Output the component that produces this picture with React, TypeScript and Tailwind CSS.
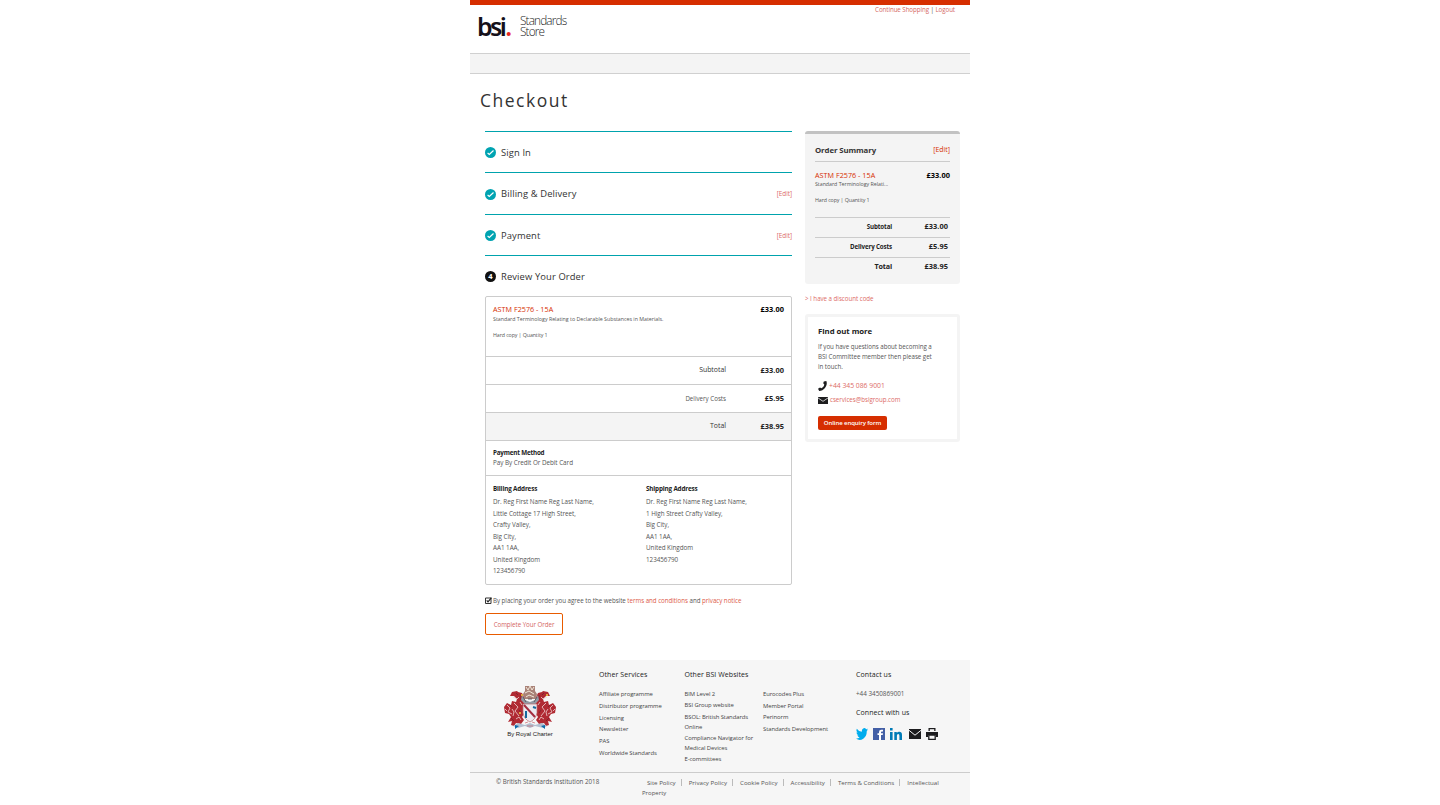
import type { ReactNode } from "react";

const body = "text-[6.2px] tracking-[-0.03px] text-[#555]";

function Check() {
  return (
    <svg className="mb-px size-[11px] shrink-0" viewBox="0 0 11 11">
      <circle cx="5.5" cy="5.5" r="5.5" fill="#00a3b1" />
      <path d="M2.600 6 4.300 7.500 8.500 3.500" fill="none" stroke="#fff" strokeWidth="1.200" />
    </svg>
  );
}

function Step({ title, height, edit, children }: { title: string; height: string; edit?: boolean; children: ReactNode }) {
  return (
    <div className={`flex items-center border-t border-[#00a3ad] pt-[2px] ${height}`}>
      {children}
      <h2 className="ml-[5px] grow text-[9.4px] tracking-[0.12px] text-[#333]">{title}</h2>
      {edit && <a className="pb-px text-[6.4px] tracking-[-0.05px] text-[#dc6b66]">[Edit]</a>}
    </div>
  );
}

function AmountRow({ label, value, labelStyle = "text-[6.9px] text-[#333]", className = "" }: { label: string; value: string; labelStyle?: string; className?: string }) {
  return (
    <div className={`flex h-[28px] items-center justify-end border-b border-[#ccc] pr-[7px] ${className}`}>
      <span className={labelStyle}>{label}</span>
      <span className="w-[58px] text-right text-[7.4px] font-bold tracking-[0.05px] text-[#222]">{value}</span>
    </div>
  );
}

function SummaryRow({ label, value, size = "text-[6.2px]" }: { label: string; value: string; size?: string }) {
  return (
    <div className="flex h-[20px] items-center justify-end border-t border-[#ccc] pb-[2px] pr-[2px]">
      <span className={`font-bold tracking-[-0.13px] text-[#222] ${size}`}>{label}</span>
      <span className="w-[56px] text-right text-[7.4px] font-bold tracking-[0.05px] text-[#222]">{value}</span>
    </div>
  );
}

function Address({ title, lines }: { title: string; lines: string[] }) {
  return (
    <div className="w-[153px] shrink-0">
      <h3 className="text-[6.3px] leading-[10px] font-bold tracking-[-0.15px] text-[#222]">{title}</h3>
      <ul className="mt-[2px] text-[6.3px] leading-[11.5px] tracking-[-0.03px] text-[#555]">
        {lines.map((l) => <li key={l}>{l}</li>)}
      </ul>
    </div>
  );
}

function Mail({ className }: { className: string }) {
  return (
    <svg className={className} viewBox="0 0 12 10" preserveAspectRatio="none">
      <path d="M0 0h12v10H0z" fill="#1d1d1f" />
      <path d="M0 1.300 6 6.200 12 1.300" fill="none" stroke="#f6f6f6" strokeWidth="1" />
    </svg>
  );
}

function Supporter() {
  return (
    <>
      <path d="M14 7l4 1 2 4-2 3 3 4-2 4 2 4-3 5 2 3-3 4-5-1-2 3-3-1 1-4-4 1 3-5-2-3-4-1-1-6 3-4 4 2 1-4 4 1 1-3-3-3-4 0 2-4 5-1z" fill="#b02a33" />
      <path d="M3 20l3 3-2 4 4 2M10 18l4 4-3 4 4 5M9 12l4 2 2-2M8 24l2 3-1 4M16 17l2 3M12 34l3-2 2 3M1 24l2 2" fill="none" stroke="#f0d5d4" strokeWidth=".8" />
      <path d="M17 10v5M6 20l2 2M15 25l2 3M7 33l3 3M12 8l2 2" fill="none" stroke="#6f1f2c" strokeWidth=".7" />
    </>
  );
}

function Arms() {
  return (
    <svg className="h-[45px] w-[52px]" viewBox="0 0 52 45">
      <g><Supporter /></g>
      <g transform="matrix(-1 0 0 1 52 0)"><Supporter /></g>
      <path d="M21 1h10v5l2 3-1 5H20l-1-5 2-3z" fill="#a98278" />
      <path d="M22 2l2 3 2-4 2 4 2-3M21 8l4-2 5 3M22 12l3-2 5 2" fill="none" stroke="#f2e7d8" strokeWidth="1" />
      <path d="M18 10l3 5 5 2 5-2 3-5 1 5-4 4H21l-4-4z" fill="#929aa5" />
      <path d="M19 12l3 5M33 12l-3 5M24 14h4" stroke="#4e4a52" strokeWidth=".8" />
      <path d="M19 19h14v9q-1 6-7 9-6-3-7-9z" fill="#eceaf0" stroke="#ba6b6f" strokeWidth=".7" />
      <path d="M20 20l11 12" stroke="#a42d3f" strokeWidth="2" />
      <path d="M22 26v7" stroke="#16699c" strokeWidth="2" />
      <path d="M29 22l3 1" stroke="#16699c" strokeWidth="2" />
      <path d="M9 41l5-3 7 2 5-2 5 2 7-2 5 3-4 2-8-2-5 2-5-2-7 2z" fill="#b3bfd0" />
      <path d="M21 38l3-1M28 37l3 1M23 41h6" stroke="#c9646c" strokeWidth=".7" />
      <path d="M11 40l4 1-4 3zM41 40l-4 1 4 3z" fill="#0b6bab" />
      <path d="M15 27h2v2h-2zM17 9h2v2h-2zM42 9h2v2h-2z" fill="#e0a63e" />
    </svg>
  );
}

function LinkList({ items, gap, className = "" }: { items: string[]; gap: string; className?: string }) {
  return (
    <ul className={`mt-[9px] flex flex-col text-[5.9px] tracking-[-0.06px] text-[#444] ${gap} ${className}`}>
      {items.map((i) => <li key={i} className="leading-[10px]">{i}</li>)}
    </ul>
  );
}

const footHead = "text-[7px] leading-[10px] tracking-[0.08px] text-[#222]";

export default function App() {
  return (
    <div className="min-h-[805px] bg-white font-['Open_Sans','Noto_Sans',sans-serif]">
      <div className="mx-auto flex h-[805px] w-[500px] flex-col">
        <header className="flex h-[53px] shrink-0 justify-between border-t-[5px] border-[#d62e00]">
          <div className="flex pl-[7px]">
            <div className="mt-[7px] w-[33px] font-['Noto_Sans',sans-serif] text-[25px] leading-[28px] font-semibold tracking-[-2.6px] text-[#15101a]">
              bsi<span className="ml-[1px] text-[#e8291f]">.</span>
            </div>
            <div className="mt-[10px] ml-[10px] text-[11.8px] leading-[10.5px] font-light tracking-[-0.85px] text-[#222]">
              Standards<br />Store
            </div>
          </div>
          <div className="pr-[15px] text-[6.2px] leading-[10px] tracking-[-0.07px] text-[#555]">
            <a className="text-[#d4655f]">Continue Shopping</a> | <a className="text-[#d4655f]">Logout</a>
          </div>
        </header>
        <div className="h-[21px] shrink-0 border-y border-[#d0d0d0] bg-[#f4f4f4]" />
        <h1 className="mt-[16px] ml-[10px] h-[41px] shrink-0 text-[17.500px] leading-[20px] tracking-[1.5px] text-[#333]">Checkout</h1>
        <main className="flex h-[529px] shrink-0 items-start gap-[13px] pl-[15px]">
          <section className="w-[307px]">
            <Step title="Sign In" height="h-[41px]"><Check /></Step>
            <Step title="Billing & Delivery" height="h-[42px]" edit><Check /></Step>
            <Step title="Payment" height="h-[41px]" edit><Check /></Step>
            <Step title="Review Your Order" height="h-[41px]">
              <span className="mb-px flex size-[11px] items-center justify-center rounded-full bg-[#111] text-[7.500px] font-bold text-white">4</span>
            </Step>
            <div className="h-[289px] rounded-[2px] border border-[#ccc]">
              <div className="flex h-[60px] justify-between border-b border-[#ccc] px-[7px] pt-[7px]">
                <div className="text-[5.3px] tracking-[-0.01px] text-[#555]">
                  <div className="text-[7.2px] leading-[10px] tracking-[0.03px] text-[#d62e00]">ASTM F2576 - 15A</div>
                  <div className="leading-[11px]">Standard Terminology Relating to Declarable Substances in Materials.</div>
                  <div className="mt-[5px] leading-[11px] tracking-[-0.1px]">Hard copy | Quantity 1</div>
                </div>
                <div className="text-[7.4px] leading-[10px] font-bold tracking-[0.05px] text-black">£33.00</div>
              </div>
              <AmountRow label="Subtotal" value="£33.00" />
              <AmountRow label="Delivery Costs" value="£5.95" labelStyle="text-[6.2px] text-[#555]" />
              <AmountRow label="Total" value="£38.95" className="bg-[#f4f4f4]" />
              <div className="h-[35px] border-b border-[#ccc] px-[7px] pt-[7px] leading-[10px]">
                <h3 className="text-[6.3px] font-bold tracking-[-0.2px] text-[#222]">Payment Method</h3>
                <p className="text-[6.3px] tracking-[-0.03px] text-[#555]">Pay By Credit Or Debit Card</p>
              </div>
              <div className="flex px-[7px] pt-[8px]">
                <Address title="Billing Address" lines={["Dr. Reg First Name Reg Last Name,", "Little Cottage 17 High Street,", "Crafty Valley,", "Big City,", "AA1 1AA,", "United Kingdom", "123456790"]} />
                <Address title="Shipping Address" lines={["Dr. Reg First Name Reg Last Name,", "1 High Street Crafty Valley,", "Big City,", "AA1 1AA,", "United Kingdom", "123456790"]} />
              </div>
            </div>
            <div className={`mt-[10px] flex h-[12px] items-center whitespace-pre ${body}`}>
              <svg className="mr-[1px] mb-px size-[7px]" viewBox="0 0 7 7"><path d="M.5 1v5.500h5.500V1z" fill="#fff" stroke="#333" /><path d="M1.700 3.400 3 4.800 6.500.7" fill="none" stroke="#222" strokeWidth="1.200" /></svg>
              <span>By placing your order you agree to the website <a className="text-[#dc5a48]">terms and conditions</a> and <a className="text-[#dc5a48]">privacy notice</a></span>
            </div>
            <button className="mt-[6px] flex h-[22px] w-[78px] items-center justify-center rounded-[2px] border border-[#e85b00] pt-px text-[6.2px] tracking-[-0.05px] text-[#d4655f]">Complete Your Order</button>
          </section>
          <aside className="w-[155px]">
            <div className="h-[153px] rounded-[3px] border-t-[3px] border-[#c2c2c2] bg-[#f4f4f4] px-[10px] pt-[10px]">
              <div className="flex h-[18px] justify-between border-b border-[#ccc] leading-[12px]">
                <h2 className="text-[7.8px] font-bold tracking-[-0.1px] text-[#333]">Order Summary</h2>
                <a className="text-[6.900px] text-[#d62e00]">[Edit]</a>
              </div>
              <div className="flex h-[55px] justify-between pt-[8px]">
                <div className="text-[5.3px] tracking-[-0.03px] text-[#555]">
                  <div className="text-[7.2px] leading-[10px] tracking-[0.03px] text-[#d62e00]">ASTM F2576 - 15A</div>
                  <div className="leading-[9px]">Standard Terminology Relati...</div>
                  <div className="mt-[6px] leading-[10px] tracking-[-0.1px]">Hard copy | Quantity 1</div>
                </div>
                <div className="text-[7.4px] leading-[10px] font-bold tracking-[0.05px] text-black">£33.00</div>
              </div>
              <SummaryRow label="Subtotal" value="£33.00" />
              <SummaryRow label="Delivery Costs" value="£5.95" />
              <SummaryRow label="Total" value="£38.95" size="text-[7.2px]" />
            </div>
            <a className="mt-[10px] block text-[6.2px] leading-[10px] tracking-[-0.03px] text-[#dc6b66]">&gt; I have a discount code</a>
            <div className="mt-[10px] h-[128px] rounded-[3px] border-[3px] border-[#f4f4f4] bg-white px-[10px] pt-[9px]">
              <h2 className="text-[7.8px] leading-[10px] font-bold tracking-[-0.05px] text-[#222]">Find out more</h2>
              <p className={`mt-[6px] leading-[10px] ${body}`}>If you have questions about becoming a<br />BSI Committee member then please get<br />in touch.</p>
              <div className="mt-[7px] flex h-[14px] items-center text-[6.8px] text-[#dc6b66]">
                <svg className="mr-[2px] h-[10px] w-[9px]" viewBox="0 0 9 10"><path d="M5.800.6 8.300 0C10 3.500 7 9.500 1.200 10L0 7.800 2 6.500l1.400.7C5 6.500 6 5.200 6.300 3.500L5.200 2.300z" fill="#1d1d1f" /></svg>
                +44 345 086 9001
              </div>
              <div className="flex h-[14px] items-center text-[6.2px] tracking-[-0.03px] text-[#dc6b66]">
                <Mail className="mr-[2px] h-[7px] w-[10px]" />cservices@bsigroup.com
              </div>
              <button className="mt-[9px] flex h-[14px] w-[69px] items-center justify-center rounded-[2px] bg-[#d62e00] text-[6.1px] font-semibold tracking-[-0.12px] text-white">Online enquiry form</button>
            </div>
          </aside>
        </main>
        <footer className="h-[145px] shrink-0 bg-[#f6f6f6]">
          <div className="flex h-[113px] border-b border-[#ccc] pt-[10px]">
            <div className="flex w-[129px] flex-col items-center pt-[15px] pr-[9px]">
              <Arms />
              <span className="font-['Liberation_Sans',sans-serif] text-[6px] leading-[8px] text-[#222]">By Royal Charter</span>
            </div>
            <div className="w-[85.5px]">
              <h3 className={footHead}>Other Services</h3>
              <LinkList gap="gap-[1.8px]" items={["Affiliate programme", "Distributor programme", "Licensing", "Newsletter", "PAS", "Worldwide Standards"]} />
            </div>
            <div className="w-[171.5px]">
              <h3 className={footHead}>Other BSI Websites</h3>
              <div className="flex">
                <LinkList gap="gap-[1.3px]" className="w-[78.5px]" items={["BIM Level 2", "BSI Group website", "BSOL: British Standards Online", "Compliance Navigator for Medical Devices", "E-committees"]} />
                <LinkList gap="gap-[1.7px]" items={["Eurocodes Plus", "Member Portal", "Perinorm", "Standards Development"]} />
              </div>
            </div>
            <div>
              <h3 className={footHead}>Contact us</h3>
              <p className="mt-[9px] text-[6.3px] leading-[10px] text-[#555]">+44 3450869001</p>
              <h3 className={`mt-[9px] ${footHead}`}>Connect with us</h3>
              <div className="mt-[10px] flex items-center">
                <svg className="mr-[5px] h-[12px] w-[12px]" viewBox="0 2 24 20" preserveAspectRatio="none"><path fill="#00aced" d="M24 4.600a10 10 0 0 1-2.800.8 5 5 0 0 0 2.200-2.700 10 10 0 0 1-3.100 1.200 4.900 4.900 0 0 0-8.400 4.500A14 14 0 0 1 1.700 3.100a4.900 4.900 0 0 0 1.500 6.600 5 5 0 0 1-2.200-.6 4.900 4.900 0 0 0 3.900 4.900 5 5 0 0 1-2.200.1 4.900 4.900 0 0 0 4.600 3.400A10 10 0 0 1 0 19.500 14 14 0 0 0 21.500 7.100 10 10 0 0 0 24 4.600z" /></svg>
                <svg className="mr-[5px] size-[12px]" viewBox="0 0 12 12"><path d="M0 0h12v12H0z" fill="#435fa6" /><path d="M6 12V7H4.500V5.200H6V4Q6 1.700 8.300 1.700H10v1.800H8.800Q8 3.500 8 4.300v.9h2L9.700 7H8v5z" fill="#fff" /></svg>
                <svg className="mr-[7px] size-[12px]" viewBox="0 0 12 12"><path d="M0 4h2.600v8H0zM0 0h2.600v2.500H0zM4.300 4h2.500v1.100Q7.500 3.800 9.200 3.800 12 3.800 12 7.100V12H9.400V7.700Q9.400 6 8.200 6 6.900 6 6.900 7.700V12H4.300z" fill="#007bb6" /></svg>
                <Mail className="mr-[5px] h-[10px] w-[12px]" />
                <svg className="size-[12px]" viewBox="0 0 12 12"><path d="M2.500 0h7v3h-7zM0 4h12v5h-2V7H2v2H0z" fill="#1d1d1f" /><path d="M3.800 1.200h4.400V3H3.800z" fill="#f6f6f6" /><path d="M2.800 7.200h6.400v4.100H2.800z" fill="#f6f6f6" stroke="#1d1d1f" strokeWidth="1.300" /></svg>
              </div>
            </div>
          </div>
          <div className="flex pt-[3px] text-[6.2px] text-[#555]">
            <span className="w-[172px] pl-[26px] leading-[11px]">© British Standards Institution 2018</span>
            <ul className="flex pt-px text-[6.15px] leading-[11px]">
              {["Site Policy", "Privacy Policy", "Cookie Policy", "Accessibility", "Terms & Conditions"].map((t) => (
                <li key={t} className="mr-[2px] flex items-center pl-[5px]">{t}<i className="ml-[5px] h-[7px] w-px bg-[#bbb]" /></li>
              ))}
              <li className="pl-[5px]">Intellectual</li>
            </ul>
          </div>
          <p className="pl-[172px] text-[6px] leading-[11px] text-[#555]">Property</p>
        </footer>
      </div>
    </div>
  );
}
